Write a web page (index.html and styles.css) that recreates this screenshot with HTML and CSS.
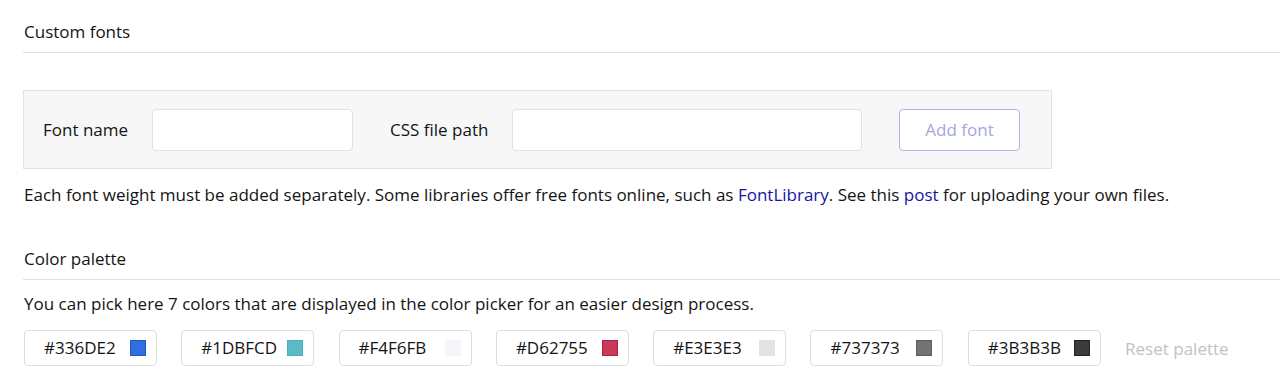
FILE: index.html
```html
<!DOCTYPE html>
<html lang="en">
  <head>
    <meta charset="UTF-8" />
    <meta name="viewport" content="width=device-width, initial-scale=1.0" />
    <title>Settings - Fonts and colors</title>
    <link rel="stylesheet" href="styles.css">
  </head>
  <body>
    <div class="settings">
      <section class="section">
        <h2 class="section-title">Custom fonts</h2>
        <form class="font-form" id="fontForm">
          <label for="fontName" class="name-label">Font name</label>
          <input type="text" id="fontName" class="font-name" />
          <label for="cssPath" class="css-label">CSS file path</label>
          <input type="text" id="cssPath" class="css-path" />
          <button type="submit" disabled>Add font</button>
        </form>
        <p class="note">
          Each font weight must be added separately. Some libraries offer free fonts online, such as
          <a href="#">FontLibrary</a>. See this <a href="#">post</a> for uploading your own files.
        </p>
      </section>

      <section class="section palette-section">
        <h2 class="section-title">Color palette</h2>
        <p class="note note-tight">
          You can pick here 7 colors that are displayed in the color picker for an easier design process.
        </p>
        <div class="palette">
          <div class="color-chip"><span>#336DE2</span><i class="swatch" style="background: #336de2; border-color: #1f55c4"></i></div>
          <div class="color-chip"><span>#1DBFCD</span><i class="swatch" style="background: #5bbcc8; border-color: #4aaebb"></i></div>
          <div class="color-chip"><span>#F4F6FB</span><i class="swatch" style="background: #f4f6fb; border-color: #f4f6fb"></i></div>
          <div class="color-chip"><span>#D62755</span><i class="swatch" style="background: #c83a58; border-color: #b0203f"></i></div>
          <div class="color-chip"><span>#E3E3E3</span><i class="swatch" style="background: #e3e3e3; border-color: #e3e3e3"></i></div>
          <div class="color-chip"><span>#737373</span><i class="swatch" style="background: #737373; border-color: #5e5e5e"></i></div>
          <div class="color-chip"><span>#3B3B3B</span><i class="swatch" style="background: #3b3b3b; border-color: #222222"></i></div>
          <button class="reset-btn" type="button">Reset palette</button>
        </div>
      </section>
    </div>
  </body>
</html>
```

FILE: styles.css
```css
* {
  box-sizing: border-box;
}

body {
  margin: 0;
  font-family: "Open Sans", "Noto Sans", sans-serif;
  font-size: 17px;
  color: #141414;
  background-color: #ffffff;
  overflow: hidden;
}

.settings {
  padding-left: 23px;
}

.section-title {
  margin: 0;
  padding: 20px 0 8px 1px;
  font-size: 17px;
  font-weight: 400;
  line-height: 24px;
  border-bottom: 1px solid #e2e2e2;
}

.font-form {
  display: flex;
  align-items: center;
  width: 1029px;
  height: 79px;
  margin-top: 37px;
  padding: 0 19px;
  background-color: #f7f7f7;
  border: 1px solid #e3e3e3;
}

.font-form label {
  line-height: 24px;
}

.name-label {
  width: 109px;
}

.css-label {
  width: 122px;
  margin-left: 37px;
}

.font-form input {
  height: 42px;
  padding: 0 10px;
  font-family: inherit;
  font-size: 17px;
  background-color: #ffffff;
  border: 1px solid #e0e0e0;
  border-radius: 4px;
}

.font-name {
  width: 201px;
}

.css-path {
  width: 350px;
}

.font-form button {
  width: 121px;
  height: 42px;
  margin-left: 37px;
  font-family: inherit;
  font-size: 17px;
  color: #a6a6e0;
  background-color: #ffffff;
  border: 1px solid #b4b4e4;
  border-radius: 4px;
}

.note {
  margin: 14px 0 0 1px;
  line-height: 24px;
}

.note a {
  color: #1515a3;
  text-decoration: none;
}

.palette-section {
  margin-top: 20px;
}

.note-tight {
  margin-top: 12px;
}

.palette {
  display: flex;
  align-items: center;
  gap: 24.3px;
  margin: 14px 0 0 1px;
}

.color-chip {
  display: flex;
  align-items: center;
  justify-content: space-between;
  width: 133px;
  height: 36px;
  padding: 0 10px 0 19px;
  border: 1px solid #dedede;
  border-radius: 4px;
}

.color-chip span {
  line-height: 24px;
}

.swatch {
  width: 16px;
  height: 16px;
  border: 1px solid transparent;
}

.reset-btn {
  padding: 0;
  font-family: inherit;
  font-size: 17px;
  color: #c2c2c2;
  background: none;
  border: none;
}
```
